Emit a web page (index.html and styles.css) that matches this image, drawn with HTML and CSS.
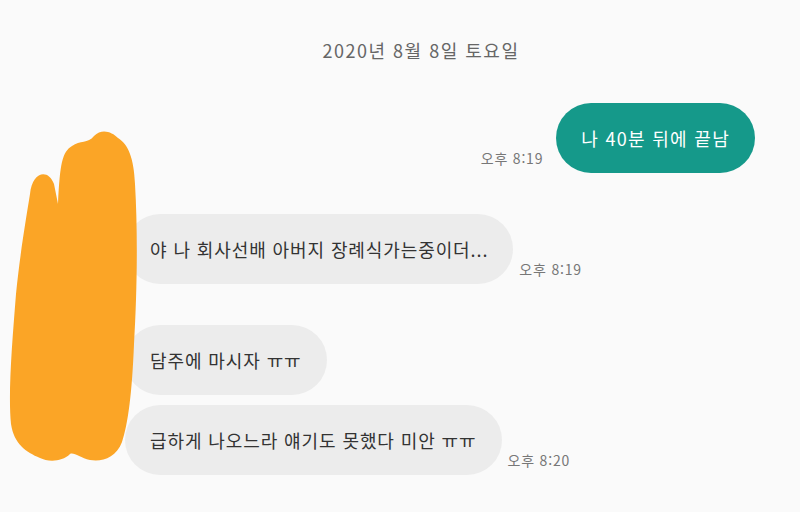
FILE: index.html
```html
<!DOCTYPE html>
<html lang="ko">
<head>
    <meta charset="UTF-8">
    <meta name="viewport" content="width=device-width, initial-scale=1.0">
    <title>채팅</title>
    <link rel="stylesheet" href="styles.css">
</head>
<body>
    <div class="chat">
        <div class="date">2020년 8월 8일 토요일</div>

        <div class="row out">
            <span class="time">오후 8:19</span>
            <div class="bubble mine">나 40분 뒤에 끝남</div>
        </div>

        <div class="row in first">
            <div class="bubble">야 나 회사선배 아버지 장례식가는중이더...</div>
            <span class="time">오후 8:19</span>
        </div>

        <div class="row in first">
            <div class="bubble">담주에 마시자 ㅠㅠ</div>
        </div>

        <div class="row in next">
            <div class="bubble">급하게 나오느라 얘기도 못했다 미안 ㅠㅠ</div>
            <span class="time">오후 8:20</span>
        </div>

        <!-- 프로필 가림 -->
        <svg class="scribble" width="150" height="340" viewBox="0 0 150 340">
            <path d="M30 70 C32 48 48 44 54 60 L58 80 C60 40 62 28 72 22 C80 16 88 20 94 12 C102 4 112 8 118 14 C128 20 134 34 135 60 C138 110 137 170 134 220 C132 270 128 300 122 318 C116 334 102 338 90 336 C80 334 74 328 70 330 C62 338 48 338 40 334 C26 328 14 320 11 300 C8 270 12 220 16 170 C20 130 26 95 30 70 Z" fill="#fba526"/>
        </svg>
    </div>
</body>
</html>
```

FILE: styles.css
```css
body {
    margin: 0;
    background-color: #fafafa;
    font-family: "Noto Sans CJK KR", "Noto Sans", sans-serif;
    color: #333;
}
.chat {
    position: relative;
    height: 512px;
    padding: 36px 45px 0 125px;
    box-sizing: border-box;
}
.date {
    margin: 0 -45px 39px -125px;
    padding-left: 42px;
    text-align: center;
    font-size: 18px;
    letter-spacing: 1.5px;
    color: #666;
    line-height: 28px;
}
.row {
    display: flex;
    align-items: flex-end;
    gap: 6px;
}
.row.out {
    justify-content: flex-end;
    gap: 13px;
}
.row.first {
    margin-top: 41px;
}
.row.next {
    margin-top: 10px;
}
.bubble {
    height: 70px;
    line-height: 70px;
    padding: 0 25px;
    border-radius: 35px;
    background-color: #ececec;
    font-size: 18px;
    letter-spacing: 0.9px;
    white-space: nowrap;
}
.bubble.mine {
    background-color: #15998a;
    color: #fff;
    letter-spacing: 1.3px;
}
.time {
    font-size: 14px;
    letter-spacing: 0.8px;
    color: #777;
    padding-bottom: 5px;
}
.scribble {
    position: absolute;
    left: 0;
    top: 124px;
}
```
